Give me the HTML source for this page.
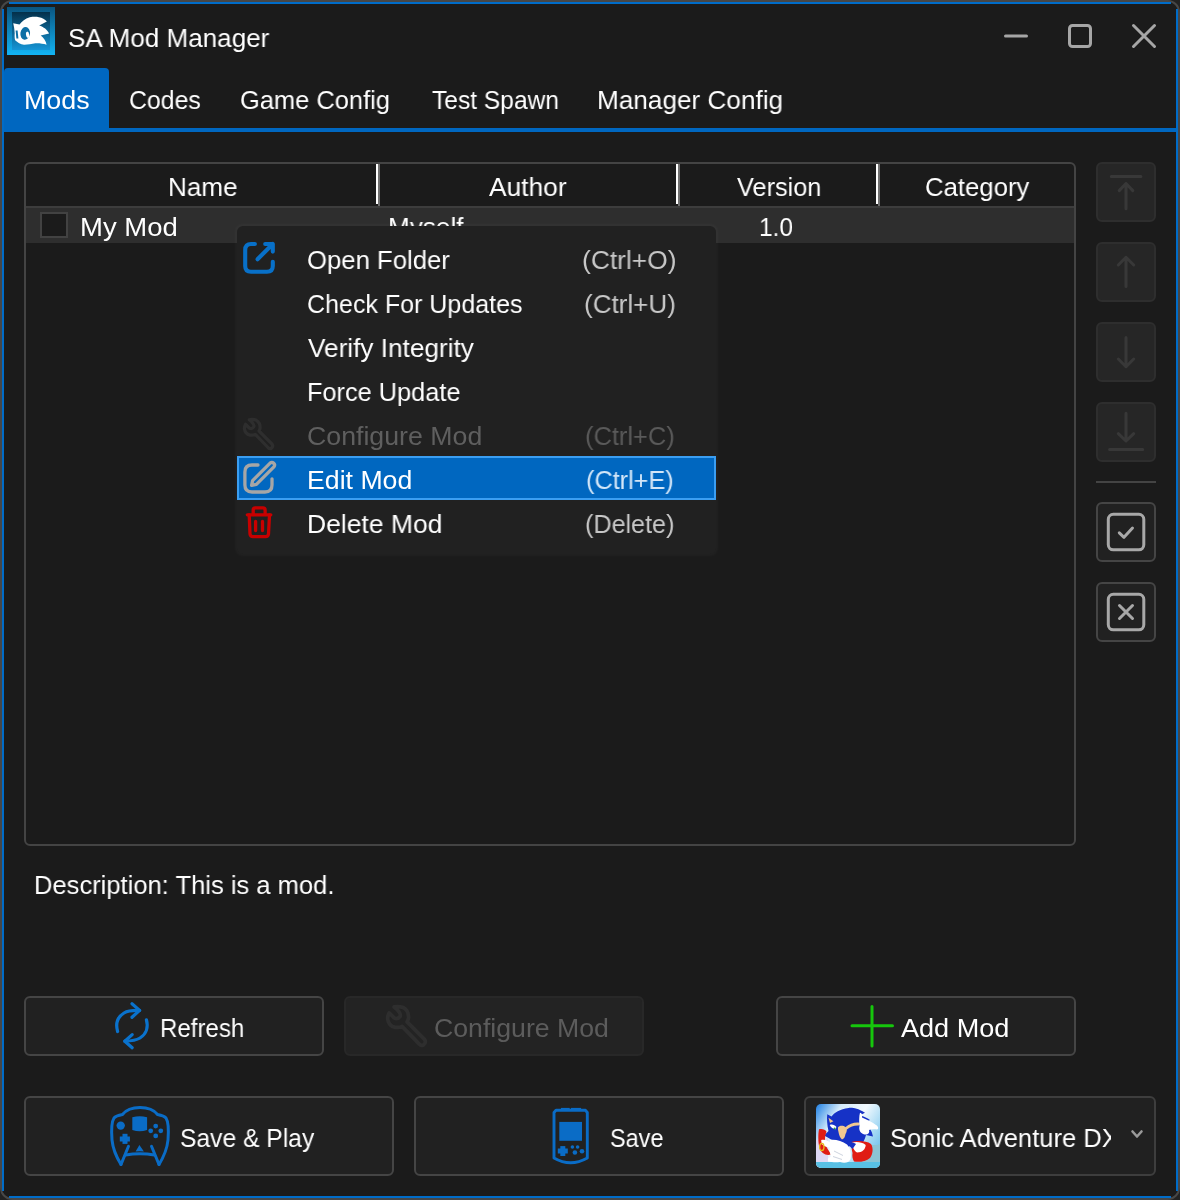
<!DOCTYPE html>
<html><head><meta charset="utf-8"><style>
html,body{margin:0;padding:0;width:1180px;height:1200px;overflow:hidden;background:#222222}
.a{position:absolute;box-sizing:border-box}
.t{position:absolute;font-family:"Liberation Sans",sans-serif;font-size:26.67px;line-height:30px;color:#fff;white-space:pre;transform-origin:0 0;will-change:transform}
.btn{position:absolute;box-sizing:border-box;background:#212121;border:2px solid #454545;border-radius:6px}
.dbtn{position:absolute;box-sizing:border-box;background:#262626;border:2px solid #2e2e2e;border-radius:6px}
svg{position:absolute;overflow:visible}
</style></head><body>
<!-- window frame -->
<div class="a" style="left:0;top:0;width:1180px;height:1200px;border-radius:12px;background:#1b1b1b;border:2px solid #474747"></div>
<div class="a" style="left:9px;top:2px;width:1162px;height:2px;background:#006cc8"></div>
<div class="a" style="left:9px;top:1196px;width:1162px;height:2px;background:#006cc8"></div>
<div class="a" style="left:2px;top:9px;width:2px;height:1182px;background:#006cc8"></div>
<div class="a" style="left:1176px;top:9px;width:2px;height:1182px;background:#006cc8"></div>

<!-- title icon -->
<svg style="left:5px;top:5px" width="52" height="52" viewBox="0 0 52 52">
<defs>
<linearGradient id="ig1" x1="0" y1="0" x2="0" y2="1"><stop offset="0" stop-color="#0a5580"/><stop offset="1" stop-color="#12b4f4"/></linearGradient>
<linearGradient id="ig2" x1="0" y1="0" x2="0" y2="1"><stop offset="0" stop-color="#04304a"/><stop offset="1" stop-color="#1595d6"/></linearGradient>
</defs>
<rect x="2" y="2" width="48" height="48" fill="url(#ig1)"/>
<rect x="7" y="7" width="38" height="38" fill="url(#ig2)"/>
<path d="M8.2 18.3 L14.5 19.5 C17 16.5 20 13.5 24.7 12.3 C28 11.8 31 11.7 34 12.2 C37 12.8 40 14.3 41.9 16.5 L34.2 20.5 C38.5 21.8 42.5 24.8 44.1 28.6 L35.7 30.4 C38.5 32.5 41 36 41.6 39.7 C38 38.5 34 38 30.4 38.2 C26.5 38.6 22.5 39.8 19 39.7 C15.5 39.5 12.5 37.5 10.1 35.3 C9.5 33 9.6 30.5 9.7 28.2 C9.5 24.5 9 21.5 8.2 18.3 Z" fill="#ffffff"/>
<ellipse cx="20.2" cy="28.4" rx="4.8" ry="6.4" transform="rotate(8 20.2 28.4)" fill="#0c6fa5"/>
<ellipse cx="22.6" cy="29.8" rx="1.6" ry="3.2" transform="rotate(-8 22.6 29.8)" fill="#ffffff"/>
<path d="M11.6 25.5 L12.4 33.5" stroke="#0c6fa5" stroke-width="2"/>
</svg>

<!-- window controls -->
<svg style="left:1000px;top:20px" width="160" height="32" viewBox="0 0 160 32">
<line x1="5.5" y1="16" x2="26.5" y2="16" stroke="#a6a6a6" stroke-width="3" stroke-linecap="round"/>
<rect x="69.5" y="5.5" width="21" height="21" rx="3" fill="none" stroke="#a6a6a6" stroke-width="3"/>
<path d="M133.5 5.5 L154.5 26.5 M154.5 5.5 L133.5 26.5" stroke="#a6a6a6" stroke-width="3" stroke-linecap="round"/>
</svg>

<!-- tabs -->
<div class="a" style="left:4px;top:68px;width:105px;height:62px;background:#0067c0;border-radius:4px 4px 0 0"></div>
<div class="a" style="left:4px;top:128px;width:1172px;height:4px;background:#0067c0"></div>

<!-- table -->
<div class="a" style="left:24px;top:162px;width:1052px;height:684px;border:2px solid #444444;border-radius:6px;background:#1b1b1b"></div>
<div class="a" style="left:26px;top:206px;width:1048px;height:2px;background:#3d3d3d"></div>
<div class="a" style="left:26px;top:208px;width:1048px;height:35px;background:#2e2e2e"></div>
<div class="a" style="left:376px;top:164px;width:2px;height:40px;background:#ffffff"></div>
<div class="a" style="left:378px;top:164px;width:2px;height:42px;background:#707070"></div>
<div class="a" style="left:676px;top:164px;width:2px;height:40px;background:#ffffff"></div>
<div class="a" style="left:678px;top:164px;width:2px;height:42px;background:#707070"></div>
<div class="a" style="left:876px;top:164px;width:2px;height:40px;background:#ffffff"></div>
<div class="a" style="left:878px;top:164px;width:2px;height:42px;background:#707070"></div>
<div class="a" style="left:40px;top:212px;width:28px;height:26px;border:2px solid #424242;background:#1b1b1b"></div>
<div class="t" style="left:387.6px;top:212.3px;color:#ffffff;transform:scaleX(0.981)">Myself</div>

<!-- right side buttons -->
<div class="dbtn" style="left:1096px;top:162px;width:60px;height:60px"></div>
<div class="dbtn" style="left:1096px;top:242px;width:60px;height:60px"></div>
<div class="dbtn" style="left:1096px;top:322px;width:60px;height:60px"></div>
<div class="dbtn" style="left:1096px;top:402px;width:60px;height:60px"></div>
<div class="a" style="left:1096px;top:481px;width:60px;height:2px;background:#444444"></div>
<div class="btn" style="left:1096px;top:502px;width:60px;height:60px"></div>
<div class="btn" style="left:1096px;top:582px;width:60px;height:60px"></div>
<svg style="left:1096px;top:162px" width="60" height="480" viewBox="0 0 60 480">
<g stroke="#383838" stroke-width="3" stroke-linecap="round" stroke-linejoin="round" fill="none">
<path d="M15.3 14.6 H44.9 M30 46.7 V21.5 M23.2 28.6 L30 21.5 L36.8 28.6"/>
<path d="M30 124.5 V95.3 M22.3 103 L30 95.3 L37.7 103"/>
<path d="M30 175.5 V204.7 M22.3 197 L30 204.7 L37.7 197"/>
<path d="M30 251.3 V279 M22.3 271.7 L30 279 L37.7 271.7 M13.6 287.6 H46.7"/>
</g>
<g stroke="#a8a8a8" stroke-width="3" stroke-linecap="round" stroke-linejoin="round" fill="none">
<rect x="12.3" y="352.3" width="35.5" height="35.5" rx="5"/>
<path d="M23.3 370.9 L28 375.3 L36.5 366.1"/>
<rect x="12.3" y="432.3" width="35.5" height="35.5" rx="5"/>
<path d="M23.5 443.5 L36.5 456.5 M36.5 443.5 L23.5 456.5"/>
</g>
</svg>

<!-- description area -->

<!-- bottom buttons -->
<div class="btn" style="left:24px;top:996px;width:300px;height:60px"></div>
<div class="dbtn" style="left:344px;top:996px;width:300px;height:60px;background:#232323;border-color:#282828"></div>
<div class="btn" style="left:776px;top:996px;width:300px;height:60px"></div>
<div class="btn" style="left:24px;top:1096px;width:370px;height:80px"></div>
<div class="btn" style="left:414px;top:1096px;width:370px;height:80px"></div>
<div class="btn" style="left:804px;top:1096px;width:352px;height:80px;border-color:#3e3e3e"></div>

<!-- refresh icon -->
<svg style="left:105px;top:1000px" width="60" height="55" viewBox="0 0 60 55">
<g stroke="#0a72cc" stroke-width="3.2" stroke-linecap="round" stroke-linejoin="round" fill="none">
<path d="M12.6 31.5 C10.5 24 12.5 17 19 13 C23 10.5 28 10.2 34.6 10.4"/>
<path d="M27 3.8 L34.6 10.4 L27 17.3"/>
<path d="M41.4 19.8 C43.5 27 41.5 34 35 38 C31 40.5 26 41 19.8 41.2"/>
<path d="M27.2 34.6 L19.8 41.2 L27.2 47.8"/>
</g>
</svg>
<!-- wrench disabled -->
<svg style="left:0px;top:0px" width="1" height="1" viewBox="0 0 1 1">
<path transform="translate(385.8,1004.6) scale(1.33)" d="M6.25 1.75 Q10 1 13 2.1 Q17.5 4.75 17.1 10 Q16.75 11.9 16 13 L29.1 26.1 Q30.6 28.4 28.4 30.3 Q26.5 31.4 25 29.5 L12.25 16.4 Q10 17.5 7 17.1 Q2.1 16 1.4 10.75 Q1.4 8.1 2.5 6.25 L6.25 10 Q8.9 11.5 10.75 8.9 Q11.9 6.25 6.25 1.75 Z" fill="none" stroke="#2e2e2e" stroke-width="2.8" stroke-linejoin="round"/>
</svg>
<!-- add icon -->
<svg style="left:848px;top:1002px" width="50" height="50" viewBox="0 0 50 50">
<path d="M4 23.8 H44.5 M24 4.5 V44" stroke="#16c60c" stroke-width="3" stroke-linecap="round"/>
</svg>

<!-- controller icon -->
<svg style="left:105px;top:1100px" width="70" height="70" viewBox="0 0 70 70">
<g stroke="#0a6cc6" stroke-width="3" fill="none" stroke-linecap="round" stroke-linejoin="round">
<path d="M16 64.5 C12 58 8 50 7 40 C6.2 30 6.5 22 9 18 C10.5 16.2 14 15.2 17.5 14.5 C21 10 27 7.5 35 7.5 C43 7.5 49 10 52.5 14.5 C56 15.2 59.5 16.2 61 18 C63.5 22 63.8 30 63 40 C62 50 58 58 54 64.5"/>
<path d="M16 64.5 L23.5 46.3 M54 64.5 L46.5 46.3"/>
<path d="M20.5 55 Q35 52.3 49.5 55"/>
</g>
<g fill="#0a6cc6">
<circle cx="15.7" cy="25.6" r="4.2"/>
<path d="M27.3 17.2 Q34.7 15.2 42.1 17.2 V30 Q34.7 32.6 27.3 30 Z"/>
<rect x="17.5" y="33.8" width="5" height="10.1"/>
<rect x="14.8" y="36.5" width="10.1" height="5"/>
<circle cx="50.7" cy="26.1" r="2.4"/>
<circle cx="45.7" cy="30.8" r="2.4"/>
<circle cx="55.8" cy="30.8" r="2.4"/>
<circle cx="50.7" cy="35.9" r="2.4"/>
<path d="M34.4 45.1 L38.9 51.6 Q34.7 50.8 30.6 51.6 Z"/>
</g>
</svg>

<!-- VMU icon -->
<svg style="left:540px;top:1100px" width="60" height="70" viewBox="0 0 60 70">
<g stroke="#0a6cc6" stroke-width="2.9" fill="none" stroke-linejoin="round">
<path d="M14 12.5 L16 10.3 H45.5 L47.3 12.5 V58 Q30.5 67.5 14 58 Z"/>
</g>
<g fill="#0a6cc6">
<rect x="21" y="7.9" width="8.7" height="2"/>
<rect x="30.9" y="7.9" width="10.2" height="2"/>
<rect x="19.3" y="21.9" width="22.7" height="18.9"/>
<rect x="20.3" y="46.1" width="5" height="9.9"/>
<rect x="17.8" y="48.5" width="10" height="5"/>
<circle cx="32.4" cy="47" r="1.8"/>
<circle cx="37.6" cy="47" r="1.8"/>
<circle cx="34.9" cy="52.5" r="2.3"/>
<circle cx="42" cy="51.2" r="2.3"/>
</g>
</svg>

<!-- game cover -->
<svg style="left:816px;top:1104px" width="64" height="64" viewBox="0 0 64 64">
<defs>
<linearGradient id="sky" x1="0" y1="0" x2="1" y2="0.6"><stop offset="0" stop-color="#1f80e4"/><stop offset="0.3" stop-color="#d6ecfb"/><stop offset="0.6" stop-color="#f2f9fe"/><stop offset="1" stop-color="#7cc8ee"/></linearGradient>
<clipPath id="cc"><rect x="0" y="0" width="64" height="64" rx="5"/></clipPath>
</defs>
<g clip-path="url(#cc)">
<rect width="64" height="64" fill="url(#sky)"/>
<path d="M0 36 L12 34 L12 64 L0 64 Z" fill="#ddd4f2" opacity="0.85"/>
<path d="M48 42 C54 40 60 42 64 40 V64 H48 Z" fill="#8cc4d4"/>
<rect y="58" width="64" height="6" fill="#58c0e4"/>
<path d="M11.2 10.3 L15.5 12.5 C18 8.5 24 5 32.6 3.9 C37 3.6 41 4 49 8.8 L44 11.2 C48 12.5 52 14 54 16 C52 17 50 17.5 49 18 C53 22 56 27 57 32.6 L50 31 C49 35 47.5 38 46.6 38.7 L38 40 L30 44 L22 40 L16 36 L8.2 31.4 L12.5 27 C11 21 10.8 15 11.2 10.3 Z" fill="#1632c6"/>
<path d="M12.5 13.7 L17.4 17.2 L14 19 Z" fill="#f0c48a"/>
<path d="M13.7 21 C16 20 19 21 20.4 23 L19.5 25.3 C17 25 15 23.5 13.7 21 Z" fill="#ffffff"/>
<circle cx="18.6" cy="24.5" r="1" fill="#30a040"/>
<path d="M22 23.5 C23 21.5 27 21 29.5 23 C31.5 25 31 28 29.5 30 C29 33 28 35 26 35.5 C24 34 23 31 22.5 28 C22 26.5 21.8 25 22 23.5 Z" fill="#f2c890"/>
<path d="M30 24.5 C34 21 38 19.8 42.4 20" fill="none" stroke="#f2c890" stroke-width="2.8" stroke-linecap="round"/>
<path d="M44 8.8 C46 9 46.5 11 46 13.5 C50 15 56 18 60 21 C62.5 22.5 63 25 61 25.5 C58 25.2 55 25 53 26 C54 28.5 52 31 48.5 30.5 C44.5 29.5 42.5 26 43.5 22 C43 18 43 12 44 8.8 Z" fill="#ffffff"/>
<path d="M3 25.3 C6 24.5 9.5 25.5 10.5 27.7 C8.5 32 8.5 38 10 42 C12 46 14 48 14.8 50.5 C10 52 5 49 3.5 44 C2 38 2 30 3 25.3 Z" fill="#e01c14"/>
<path d="M5.2 36 C8.5 35 12.5 36.5 15 39.5 L14.5 43.6 C11 43.5 7.5 42 5.6 40 Z" fill="#ffffff"/>
<ellipse cx="5.8" cy="43" rx="2.2" ry="3.6" fill="none" stroke="#e8b820" stroke-width="1.3"/>
<path d="M35.5 38 C41 36.5 50 36.5 55 40 C57.5 44 57 50 54 54 C50 57.5 43 58.5 38 57.5 C36.5 55 36 52 36.5 49 C35.5 45 35.2 41 35.5 38 Z" fill="#e01c14"/>
<path d="M35.7 38.7 C40 37.5 46 38 49.7 41 C49.5 45 46.5 48.5 41 48.5 C38 47 36.5 42.5 35.7 38.7 Z" fill="#ffffff"/>
<path d="M14 36 C19 35 26 37 31 40.5 C34.5 44 35.5 50 34.5 55 C33 59 28 59.5 24 58 C20 58.5 16 58.5 12.5 57 C11 55.5 12.5 53.5 15 52.5 C13.5 48 13 41 14 36 Z" fill="#ffffff"/>
<path d="M18 47 L27 51.5 M17 52.5 L26 55.5" stroke="#b8c0d0" stroke-width="0.7"/>
<path d="M31 37 C34 38 38 38.5 40 40 L36.5 45 C34 43 31.5 40 31 37 Z" fill="#1632c6"/>
</g>
</svg>
<svg style="left:1125px;top:1125px" width="24" height="20" viewBox="0 0 24 20">
<path d="M7.5 6.5 L12 11.5 L16.5 6.5" stroke="#9a9a9a" stroke-width="2.6" fill="none" stroke-linecap="round" stroke-linejoin="round"/>
</svg>

<!-- context menu -->
<div class="a" style="left:237px;top:226px;width:479px;height:328px;border-radius:6px;background:#212121;box-shadow:0 0 3px 2px rgba(255,255,255,0.03)"></div>
<div class="a" style="left:237px;top:456px;width:479px;height:44px;background:#0067c0;border:2px solid #3b9ef2"></div>
<svg style="left:237px;top:226px" width="60" height="328" viewBox="0 0 60 328">
<defs>
<path id="wr" d="M6.25 1.75 Q10 1 13 2.1 Q17.5 4.75 17.1 10 Q16.75 11.9 16 13 L29.1 26.1 Q30.6 28.4 28.4 30.3 Q26.5 31.4 25 29.5 L12.25 16.4 Q10 17.5 7 17.1 Q2.1 16 1.4 10.75 Q1.4 8.1 2.5 6.25 L6.25 10 Q8.9 11.5 10.75 8.9 Q11.9 6.25 6.25 1.75 Z"/>
</defs>
<g stroke="#0870c8" stroke-width="4.1" fill="none" stroke-linecap="round" stroke-linejoin="round">
<path d="M17.9 18 H14 Q8.2 18 8.2 24 V40 Q8.2 45.8 14 45.8 H30 Q35.8 45.8 35.8 40 V35.7"/>
<path d="M28.2 18 H35.8 V25.6 M35.8 18 L20.5 33.3"/>
</g>
<use href="#wr" x="6" y="192" stroke="#2e2e2e" stroke-width="3.2" fill="none" stroke-linejoin="round"/>
<g stroke="#a6a6a6" stroke-width="3.3" fill="none" stroke-linecap="round" stroke-linejoin="round">
<path d="M21 239 H15 Q7.9 239 7.9 246 V259 Q7.9 266 15 266 H28 Q35 266 35 259 V252.8"/>
<path d="M14.6 259.4 L15.6 254.6 L33.1 237.1 A2.7 2.7 0 0 1 36.9 240.9 L19.4 258.4 Z"/>
</g>
<g stroke="#c80000" stroke-width="3.3" fill="none" stroke-linecap="round" stroke-linejoin="round">
<path d="M10.3 288.8 H33.8"/>
<path d="M16.2 288.5 V284 Q16.2 281.9 18.3 281.9 H26 Q28.1 281.9 28.1 284 V288.5"/>
<path d="M12.2 289 L13 308 Q13.4 310.6 16 310.6 H28.5 Q31.1 310.6 31.5 308 L32.5 289"/>
<path d="M18.6 295.5 V304.5 M25.5 295.5 V304.5"/>
</g>
</svg>

<div class="t" style="left:67.82px;top:23.00px;color:#ffffff;transform:scaleX(0.9776)">SA Mod Manager</div>
<div class="t" style="left:23.59px;top:85.00px;color:#ffffff;transform:scaleX(1.0065)">Mods</div>
<div class="t" style="left:128.57px;top:85.00px;color:#ffffff;transform:scaleX(0.9307)">Codes</div>
<div class="t" style="left:240.05px;top:85.00px;color:#ffffff;transform:scaleX(0.9548)">Game Config</div>
<div class="t" style="left:431.70px;top:85.00px;color:#ffffff;transform:scaleX(0.9213)">Test Spawn</div>
<div class="t" style="left:597.24px;top:85.00px;color:#ffffff;transform:scaleX(0.9812)">Manager Config</div>
<div class="t" style="left:167.84px;top:172.00px;color:#ffffff;transform:scaleX(0.9794)">Name</div>
<div class="t" style="left:489.30px;top:172.00px;color:#ffffff;transform:scaleX(0.9886)">Author</div>
<div class="t" style="left:736.90px;top:172.00px;color:#ffffff;transform:scaleX(0.9494)">Version</div>
<div class="t" style="left:925.34px;top:172.00px;color:#ffffff;transform:scaleX(0.9645)">Category</div>
<div class="t" style="left:79.74px;top:212.30px;color:#ffffff;transform:scaleX(1.0308)">My Mod</div>
<div class="t" style="left:758.96px;top:212.30px;color:#ffffff;transform:scaleX(0.9176)">1.0</div>
<div class="t" style="left:306.64px;top:245.30px;color:#ffffff;transform:scaleX(0.9639)">Open Folder</div>
<div class="t" style="left:306.66px;top:289.30px;color:#ffffff;transform:scaleX(0.9386)">Check For Updates</div>
<div class="t" style="left:307.60px;top:333.30px;color:#ffffff;transform:scaleX(0.9822)">Verify Integrity</div>
<div class="t" style="left:306.60px;top:377.30px;color:#ffffff;transform:scaleX(0.9503)">Force Update</div>
<div class="t" style="left:306.60px;top:421.30px;color:#5f5f5f;transform:scaleX(1.0023)">Configure Mod</div>
<div class="t" style="left:306.50px;top:465.30px;color:#ffffff;transform:scaleX(1.0010)">Edit Mod</div>
<div class="t" style="left:306.71px;top:509.30px;color:#ffffff;transform:scaleX(0.9932)">Delete Mod</div>
<div class="t" style="left:582.41px;top:245.30px;color:#c8c8c8;transform:scaleX(0.9882)">(Ctrl+O)</div>
<div class="t" style="left:583.72px;top:289.30px;color:#c8c8c8;transform:scaleX(0.9761)">(Ctrl+U)</div>
<div class="t" style="left:584.55px;top:421.30px;color:#5a5a5a;transform:scaleX(0.9533)">(Ctrl+C)</div>
<div class="t" style="left:585.85px;top:465.30px;color:#d2e6f8;transform:scaleX(0.9467)">(Ctrl+E)</div>
<div class="t" style="left:584.56px;top:509.30px;color:#c8c8c8;transform:scaleX(0.9430)">(Delete)</div>
<div class="t" style="left:33.88px;top:870.00px;color:#ffffff;transform:scaleX(0.9581)">Description: This is a mod.</div>
<div class="t" style="left:159.89px;top:1013.00px;color:#ffffff;transform:scaleX(0.9033)">Refresh</div>
<div class="t" style="left:434.30px;top:1013.00px;color:#5c5c5c;transform:scaleX(1.0006)">Configure Mod</div>
<div class="t" style="left:900.70px;top:1013.00px;color:#ffffff;transform:scaleX(1.0152)">Add Mod</div>
<div class="t" style="left:179.98px;top:1122.70px;color:#ffffff;transform:scaleX(0.9243)">Save &amp; Play</div>
<div class="t" style="left:609.92px;top:1122.70px;color:#ffffff;transform:scaleX(0.8797)">Save</div>
<div style="position:absolute;left:880px;top:1100px;width:231.4px;height:60px;overflow:hidden"><div class="t" style="left:9.64px;top:22.50px;transform:scaleX(0.9594)">Sonic Adventure DX</div></div>
</body></html>
